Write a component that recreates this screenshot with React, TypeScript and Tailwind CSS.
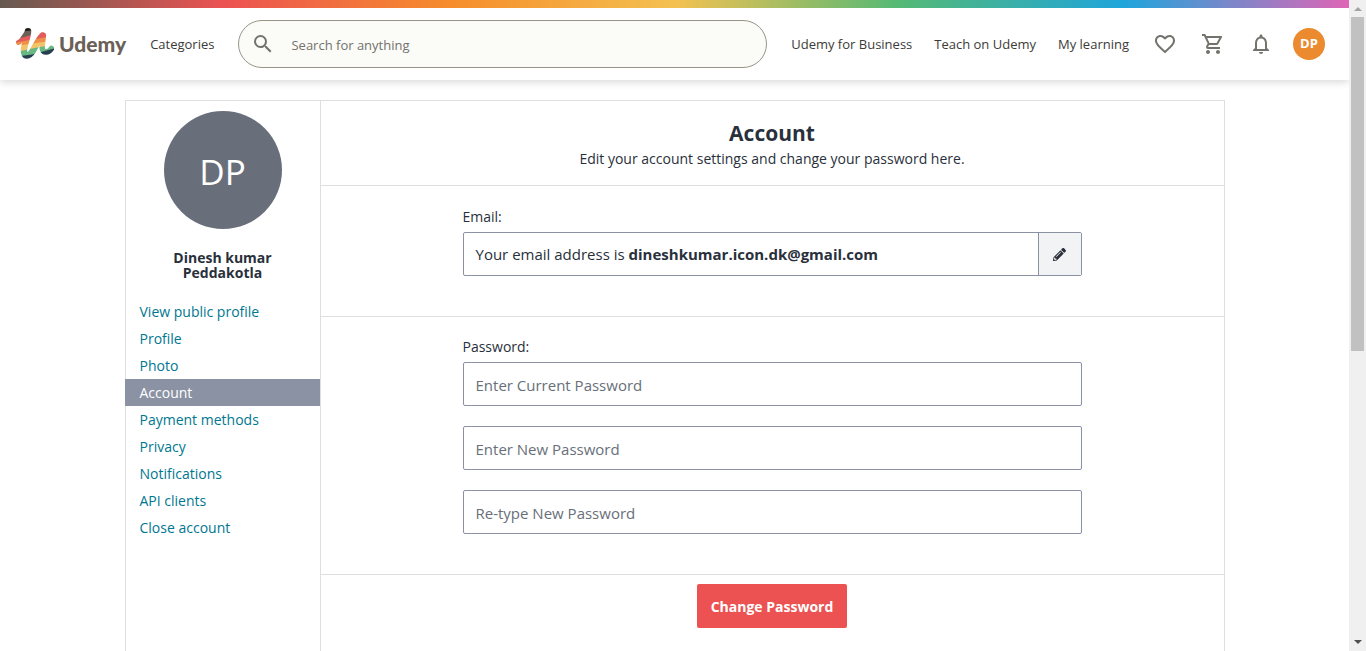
import React from "react";
import {
  MdSearch,
  MdFavoriteBorder,
  MdOutlineShoppingCart,
  MdNotificationsNone,
} from "react-icons/md";
import { FaPencilAlt } from "react-icons/fa";

const navItems = [
  "View public profile",
  "Profile",
  "Photo",
  "Account",
  "Payment methods",
  "Privacy",
  "Notifications",
  "API clients",
  "Close account",
];

const passwordFields = [
  { id: "current-password", placeholder: "Enter Current Password" },
  { id: "new-password", placeholder: "Enter New Password" },
  { id: "confirm-password", placeholder: "Re-type New Password" },
];

function LogoMark() {
  return (
    <svg width="38" height="32" viewBox="0 0 38 32" aria-hidden="true">
      <defs>
        <mask id="mark">
          <g fill="none" stroke="#fff" strokeLinecap="round" strokeLinejoin="round">
            <path d="M2.500 14.500C5 13.500 8 9 10.500 5" strokeWidth="5" />
            <path d="M12 3.300C12 9 8.500 15 8 21.500C7.500 29.500 13 29 17 22.500C20 17 23 11 26.300 7.800" strokeWidth="6.500" />
            <path d="M27.300 7.300C27.500 12 25 17.500 26.500 21.500C28 25.500 33 24.500 35.500 20.500" strokeWidth="5.500" />
          </g>
        </mask>
      </defs>
      <g mask="url(#mark)">
        <rect width="38" height="32" fill="#1e1e1c" />
        <path d="M0 4L20 2L38 0V32H0z" fill="#6a6057" />
        <path d="M0 11L16 7L22 3L38 1V32H0z" fill="#e35b5a" />
        <path d="M0 14.500L16 11.500L38 8V32H0z" fill="#ee8f4a" />
        <path d="M0 18L16 15.500L38 12.500V32H0z" fill="#f3c368" />
        <path d="M0 24L16 20.500L38 16.500V32H0z" fill="#69b883" />
        <path d="M0 28.500L16 26.500L38 20.500V32H0z" fill="#26404f" />
      </g>
    </svg>
  );
}

function Header() {
  return (
    <header className="relative shadow-[0_2px_8px_rgba(0,0,0,0.16)]">
      <div className="h-2 bg-[linear-gradient(90deg,#665a50,#ec5252,#f68c2c,#f4c150,#54b975,#1fa5dc,#e065b5)]" />
      <div className="flex h-[72px] items-center bg-white pr-6 pl-4 text-[13px] text-[#3c3b37]">
        <a href="#" className="flex items-center gap-[5px] font-['Lato',sans-serif] text-[21px] font-black text-[#6a6057]">
          <LogoMark />
          Udemy
        </a>
        <a href="#" className="ml-6 pt-[2px]">Categories</a>
        <form className="mx-6 flex h-12 flex-1 items-center rounded-full border border-[#989586] bg-[#fbfbf8]">
          <button type="button" aria-label="Search" className="flex h-full w-12 items-center justify-center text-[#73726c]">
            <MdSearch size={24} />
          </button>
          <input
            type="text"
            aria-label="Search for anything"
            placeholder="Search for anything"
            className="h-full min-w-0 flex-1 bg-transparent pt-[2px] pl-1 outline-none placeholder:text-[#73726c]"
          />
        </form>
        <nav className="flex items-center gap-[22px] pt-[2px]">
          <a href="#">Udemy for Business</a>
          <a href="#">Teach on Udemy</a>
          <a href="#">My learning</a>
        </nav>
        <div className="ml-3 flex items-center text-[#73726c]">
          <button type="button" aria-label="Wishlist" className="flex size-12 items-center justify-center">
            <MdFavoriteBorder size={24} />
          </button>
          <button type="button" aria-label="Cart" className="flex size-12 items-center justify-center">
            <MdOutlineShoppingCart size={24} />
          </button>
          <button type="button" aria-label="Notifications" className="flex size-12 items-center justify-center">
            <MdNotificationsNone size={24} />
          </button>
          <button type="button" aria-label="My account" className="ml-2 flex size-8 items-center justify-center rounded-full bg-[#eb8a2f] text-[13px] font-bold text-white">
            DP
          </button>
        </div>
      </div>
    </header>
  );
}

function Sidebar() {
  return (
    <aside className="w-[195px] shrink-0 border-r border-[#dedfe0]">
      <div className="mx-auto mt-[10px] flex size-[118px] items-center justify-center rounded-full bg-[#686f7a] pt-1 text-[35px] text-white">
        DP
      </div>
      <p className="mt-[21px] text-center text-[14px] leading-[15px] font-bold">
        Dinesh kumar
        <br />
        Peddakotla
      </p>
      <nav className="mt-[18px]">
        {navItems.map((item) => (
          <a
            key={item}
            href="#"
            className={
              item === "Account"
                ? "-ml-px block bg-[#8a92a3] pl-[15px] text-[14px] leading-[27px] text-white"
                : "block pl-[14px] text-[14px] leading-[27px] text-[#007791]"
            }
          >
            {item}
          </a>
        ))}
      </nav>
    </aside>
  );
}

function AccountPanel() {
  return (
    <main className="min-w-0 flex-1">
      <div className="h-[85px] border-b border-[#dedfe0] pt-[18px] text-center">
        <h1 className="text-[21px] leading-7 font-bold">Account</h1>
        <p className="text-[14px] leading-6">Edit your account settings and change your password here.</p>
      </div>
      <div className="border-b border-[#dedfe0] pt-5 pb-10">
        <div className="mx-auto max-w-[619px]">
          <p className="text-[14px] leading-[21px]">Email:</p>
          <div className="mt-[5px] flex h-11 rounded-xs border border-[#8a92a3]">
            <p className="flex-1 pl-3 text-[15px] leading-[42px]">
              Your email address is <b>dineshkumar.icon.dk@gmail.com</b>
            </p>
            <button type="button" aria-label="Edit email" className="flex w-[43px] items-center justify-center border-l border-[#8a92a3] bg-[#f2f3f5]">
              <FaPencilAlt size={13} />
            </button>
          </div>
        </div>
      </div>
      <form>
        <div className="border-b border-[#dedfe0] pt-[19px] pb-10">
          <div className="mx-auto max-w-[619px]">
            <label htmlFor="current-password" className="block text-[14px] leading-[21px]">Password:</label>
            <div className="mt-[5px] flex flex-col gap-5">
              {passwordFields.map((field) => (
                <input
                  key={field.id}
                  id={field.id}
                  type="password"
                  aria-label={field.id === "current-password" ? undefined : field.placeholder}
                  placeholder={field.placeholder}
                  className="h-11 w-full rounded-xs border border-[#8a92a3] px-3 pt-[2px] text-[15px] outline-none placeholder:text-[#686f7a]"
                />
              ))}
            </div>
          </div>
        </div>
        <div className="py-[9px] text-center">
          <button type="submit" className="h-11 w-[150px] rounded-xs bg-[#ec5252] text-[14px] font-bold text-white">
            Change Password
          </button>
        </div>
      </form>
    </main>
  );
}

function ScrollTrack() {
  return (
    <div aria-hidden="true" className="flex w-[17px] shrink-0 flex-col items-center bg-[#f0f0f0]">
      <svg width="17" height="17" className="shrink-0">
        <path d="M5 11h8L9 7z" fill="#a3a3a3" />
      </svg>
      <div className="h-[334px] w-[13px] bg-[#c1c1c1]" />
      <svg width="17" height="17" className="mt-auto shrink-0">
        <path d="M5 6h8L9 10z" fill="#505050" />
      </svg>
    </div>
  );
}

export default function App() {
  return (
    <div className="flex h-screen overflow-hidden bg-white font-['Open_Sans',sans-serif] text-[#29303b]">
      <div className="flex min-w-0 flex-1 flex-col overflow-hidden">
        <Header />
        <div className="mx-auto mt-5 flex w-full max-w-[1100px] flex-1 border border-b-0 border-[#dedfe0]">
          <Sidebar />
          <AccountPanel />
        </div>
      </div>
      <ScrollTrack />
    </div>
  );
}
